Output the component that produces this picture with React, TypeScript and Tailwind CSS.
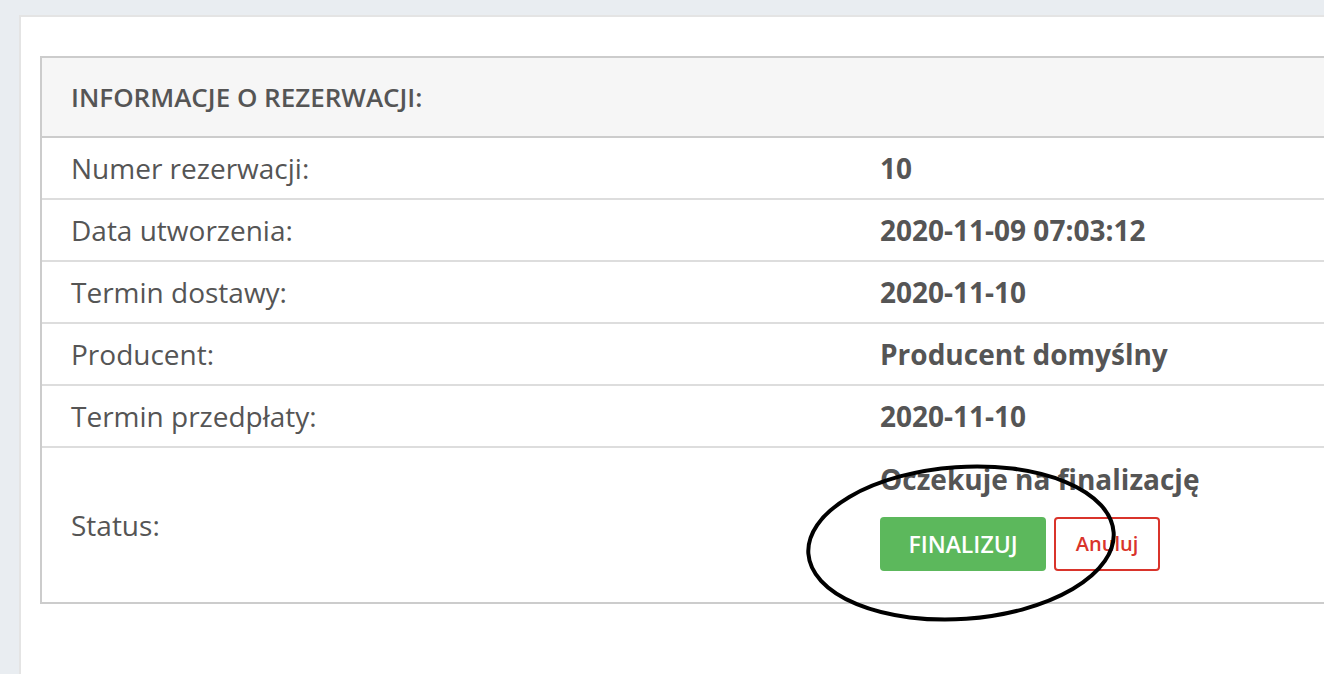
import React from "react";

const rows: [string, string][] = [
  ["Numer rezerwacji:", "10"],
  ["Data utworzenia:", "2020-11-09 07:03:12"],
  ["Termin dostawy:", "2020-11-10"],
  ["Producent:", "Producent domyślny"],
  ["Termin przedpłaty:", "2020-11-10"],
];

export default function App() {
  return (
    <div
      className="relative w-[1324px] h-[674px] overflow-hidden bg-[#e9edf1] text-[#555555]"
      style={{ fontFamily: '"Open Sans", "Liberation Sans", sans-serif' }}
    >
      <div className="ml-[19px] mt-[15px] w-[1400px] h-[700px] bg-white border-l-2 border-t-2 border-[#e4e4e4] pt-[39px] pl-[19px]">
        <div className="w-[1400px] border-2 border-[#cccccc]">
          <div className="h-[80px] bg-[#f6f6f6] border-b-2 border-[#cccccc] flex items-center pl-[29px] text-[26px] font-semibold">
            INFORMACJE O REZERWACJI:
          </div>
          {rows.map(([k, v]) => (
            <div key={k} className="h-[62px] flex items-center border-b-2 border-[#dddddd] text-[28px] leading-[36px]">
              <div className="w-[838px] pl-[29px]">{k}</div>
              <div className="font-bold">{v}</div>
            </div>
          ))}
          <div className="h-[154px] flex items-center text-[28px] leading-[36px]">
            <div className="w-[838px] pl-[29px]">Status:</div>
            <div className="self-start pt-[13px] flex flex-col gap-[20px]">
              <div className="font-bold leading-[36px]">Oczekuje na finalizację</div>
              <div className="flex gap-[8px]">
                <button className="w-[166px] h-[54px] rounded-[4px] bg-[#5cb85c] text-white font-semibold text-[23px]">
                  FINALIZUJ
                </button>
                <button className="w-[106px] h-[54px] rounded-[4px] border-2 border-[#d9342b] text-[#d9342b] font-semibold text-[20px]">
                  Anuluj
                </button>
              </div>
            </div>
          </div>
        </div>
      </div>
      <svg className="absolute left-0 top-0 pointer-events-none" width="1324" height="674">
        <ellipse
          cx="961"
          cy="543"
          rx="153"
          ry="76"
          transform="rotate(-4 961 543)"
          fill="none"
          stroke="#000"
          strokeWidth="4"
        />
      </svg>
    </div>
  );
}
